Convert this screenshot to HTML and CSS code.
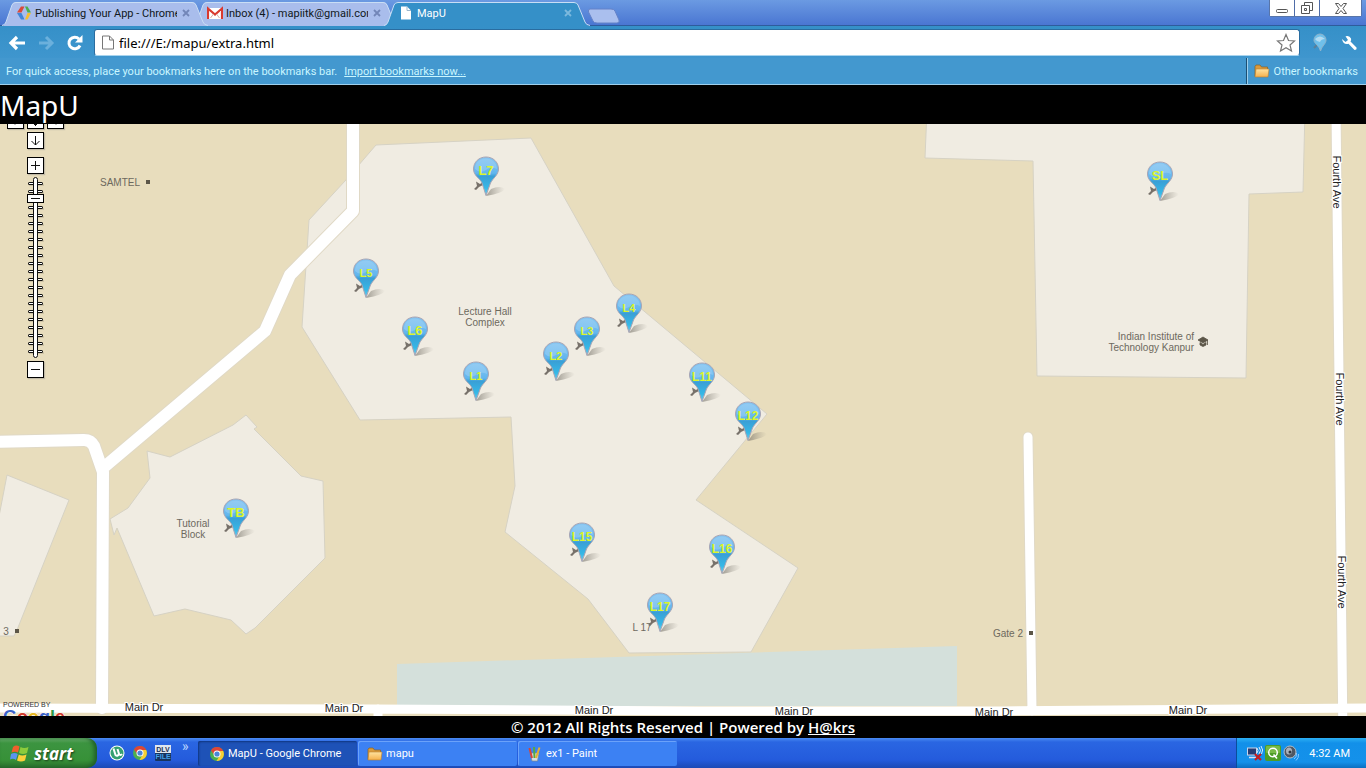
FILE: index.html
```html
<!DOCTYPE html>
<html lang="en">
<head>
<meta charset="utf-8">
<title>MapU</title>
<link rel="stylesheet" href="styles.css">
</head>
<body>
<svg class="defs" aria-hidden="true">
  <defs>
    <linearGradient id="pinFill" x1="0" y1="0" x2="0" y2="1">
      <stop offset="0" stop-color="#86c4f0"/><stop offset=".42" stop-color="#62b6ee"/><stop offset=".5" stop-color="#3a9fd6"/><stop offset=".8" stop-color="#36b8e6"/><stop offset="1" stop-color="#6fcaf0"/>
    </linearGradient>
    <linearGradient id="pinShadow" x1="0" y1="0" x2="1" y2="0">
      <stop offset="0" stop-color="#6b675e" stop-opacity=".6"/><stop offset="1" stop-color="#8a867c" stop-opacity="0"/>
    </linearGradient>
    <linearGradient id="tabFill" x1="0" y1="0" x2="0" y2="1">
      <stop offset="0" stop-color="#b4c6f2"/><stop offset="1" stop-color="#9cb2e6"/>
    </linearGradient>
    <linearGradient id="folderFill" x1="0" y1="0" x2="0" y2="1">
      <stop offset="0" stop-color="#ffe3a0"/><stop offset="1" stop-color="#f5b04c"/>
    </linearGradient>
    <symbol id="pin" viewBox="0 0 40 42">
      <path d="M14 40 19 33Q28 29 33 33 31 37 14 40Z" fill="url(#pinShadow)"/>
      <path d="M2 33 5 30 4 25.500 8 28 11 26 11 29 7 31 4 34Z" fill="#77716a"/>
      <path d="M14 1C21 1 26.500 6 26.500 13 26.500 19 21 22 18.500 27L14 39.500 10 27C8 22 1.500 20 1.500 13 1.500 6 7 1 14 1Z" fill="url(#pinFill)" stroke="#a9a5b4"/>
      <path d="M3 13C3 6 8 2.500 14 2.500S25 7 25 13Q19 10 14 14 8 18 3 13Z" fill="#a4d5f6" fill-opacity=".45"/>
    </symbol>
    <symbol id="chrome" viewBox="0 0 16 16">
      <circle cx="8" cy="8" r="7" fill="#4caf50"/>
      <path d="M2 4.400A7 7 0 0 1 14.200 5L8 5 5.500 9.500Z" fill="#dd4538"/>
      <path d="M14.200 5A7 7 0 0 1 7.500 15L10.800 9.500 10 5Z" fill="#f7cf35"/>
      <circle cx="8" cy="8" r="3.500" fill="#fff"/><circle cx="8" cy="8" r="2.600" fill="#4a86d8"/>
    </symbol>
    <symbol id="page" viewBox="0 0 12 14"><path d="M.5.500H7.500L11.500 4.500V13.500H.500Z M7.500.500V4.500H11.500" fill="#fff" stroke="#777"/></symbol>
    <symbol id="folder" viewBox="0 0 16 14"><path d="M1 12V2.500L2 1H6L7.500 3H13.500V12.500H1Z" fill="#d99a3c" stroke="#8b6220" stroke-width=".7"/><path d="M1 13 2 5H15L14 13Z" fill="url(#folderFill)" stroke="#b98030" stroke-width=".6"/></symbol>
    <symbol id="tabshape" viewBox="0 0 206 25">
      <path d="M0 25Q3 24 4 21L10 4Q11 1 14 1H190Q193 1 194 4L201 21Q202 24 206 25Z" fill="currentColor" stroke="none"/>
      <path d="M0 24.500Q3 24 4 21L10 4Q11 1.500 14 1.500H190Q193 1.500 194 4L201 21Q202 24 206 24.500" fill="none" stroke="#c9def5"/>
    </symbol>
    <symbol id="close" viewBox="0 0 8 8"><path d="M1 1 7 7M7 1 1 7" fill="none" stroke="currentColor" stroke-width="1.800"/></symbol>
  </defs>
</svg>

<header class="browser">
  <div class="tabstrip">
    <nav class="tabs" aria-label="Tabs">
      <div class="tab first">
        <svg class="tab-shape"><use href="#tabshape"/></svg>
        <svg class="icon16" viewBox="0 0 16 16"><path d="M5 1.500H8.500L5.500 7.500H1Z" fill="#d94a3a"/><path d="M1 8H5.500L8.500 14.500H5Z" fill="#4285d8"/><path d="M9 1.500H11.500L15 7.500H11.500Z" fill="#4caf50"/><path d="M11.500 8H15L11.500 14.500H9Z" fill="#f5bd30"/></svg>
        <span class="tab-title">Publishing Your App - Chrome</span>
        <button class="tab-close" aria-label="Close tab"><svg><use href="#close"/></svg></button>
      </div>
      <div class="tab">
        <svg class="tab-shape"><use href="#tabshape"/></svg>
        <svg class="icon16" viewBox="0 0 16 16"><path d="M1 3H15V14H1Z" fill="#fff"/><path d="M1 14V3.500L8 9.500 15 3.500V14" fill="none" stroke="#d93a30" stroke-width="2.200"/><path d="M3.500 13 6.500 9M12.500 13 9.500 9" stroke="#d9a8a4"/></svg>
        <span class="tab-title">Inbox (4) - mapiitk@gmail.com</span>
        <button class="tab-close" aria-label="Close tab"><svg><use href="#close"/></svg></button>
      </div>
      <div class="tab active">
        <svg class="tab-shape"><use href="#tabshape"/></svg>
        <svg class="icon16" viewBox="0 0 16 16"><path d="M3 1.500H9L13 5.500V14.500H3Z" fill="#fff"/><path d="M9 1.500V5.500H13" fill="none" stroke="#9bb6cc"/></svg>
        <span class="tab-title">MapU</span>
        <button class="tab-close" aria-label="Close tab"><svg><use href="#close"/></svg></button>
      </div>
      <button class="new-tab" aria-label="New tab"><svg viewBox="0 0 34 16"><path d="M3 1H24Q27 1 28 3L32 12Q33 15 30 15H10Q7 15 6 13L1.500 4Q1 1 3 1Z" fill="#aabfee" stroke="#6482c8"/></svg></button>
    </nav>
    <div class="window-buttons">
      <button aria-label="Minimize"><svg viewBox="0 0 14 14"><rect x="1.500" y="8.500" width="11" height="3" rx="1"/></svg></button>
      <button aria-label="Restore"><svg viewBox="0 0 14 14"><path d="M4.500 4V1.500H12.500V9.500H10M1.500 4.500H9.500V12.500H1.500ZM4.500 7.500H6.500V9.500H4.500Z"/></svg></button>
      <button class="wide" aria-label="Close"><svg viewBox="0 0 14 14"><path d="M1.500 2.500H4.500L7 5.500 9.500 2.500H12.500L9 7.500 12.500 12.500H9.500L7 9.500 4.500 12.500H1.500L5 7.500Z"/></svg></button>
    </div>
  </div>

  <div class="toolbar">
    <button aria-label="Back"><svg viewBox="0 0 18 18"><path d="M17 9H4M9 3 3 9 9 15" stroke="#fff" stroke-width="3.200" fill="none"/></svg></button>
    <button class="faded" aria-label="Forward"><svg viewBox="0 0 18 18"><path d="M2 9H14M9 3 15 9 9 15" stroke="#6bb0dc" stroke-width="3" fill="none"/></svg></button>
    <button aria-label="Reload"><svg viewBox="0 0 18 18"><path d="M14 11.500A5.800 5.800 0 1 1 13 5" stroke="#fff" stroke-width="3" fill="none"/><path d="M16.500 1V8.500H9Z" fill="#fff"/></svg></button>
    <div class="omnibox">
      <svg class="page-icon"><use href="#page"/></svg>
      <input class="url" type="text" aria-label="Address" value="file:///E:/mapu/extra.html">
      <button aria-label="Bookmark this page"><svg viewBox="0 0 20 20"><path d="M10 1.500 12.500 7.500 18.500 8 14 12 15.500 18 10 14.700 4.500 18 6 12 1.500 8 7.500 7.500Z" fill="#fff" stroke="#777" stroke-width="1.200"/></svg></button>
    </div>
    <button class="ext" aria-label="MapU extension"><svg viewBox="0 0 18 20"><path d="M3 15 7 11" stroke="#5b7f98" stroke-width="2"/><path d="M9 1A6 6 0 0 1 15 7C15 11 11.500 12 9.500 18 8 12 3 11 3 7A6 6 0 0 1 9 1Z" fill="#6fc0ea" stroke="#8fb4cc"/><path d="M4 6Q9 1 14 6 10 6 9 9 6 9 4 6Z" fill="#b4dcf2"/></svg></button>
    <button aria-label="Settings"><svg viewBox="0 0 18 18"><path d="M2 5 5.500 8 8 6 5.500 2.300Q9.500 1 11 4.500 11.500 6.500 10.500 7.500L16.500 13.500Q17 16 14.500 16L8.500 9.800Q3 11 2 5Z" fill="#fff"/></svg></button>
  </div>

  <div class="bookmarks">
    <span>For quick access, place your bookmarks here on the bookmarks bar.</span>
    <a href="#import">Import bookmarks now...</a>
    <button class="other"><svg><use href="#folder"/></svg>Other bookmarks</button>
  </div>
</header>

<h1 class="site-title">MapU</h1>

<main class="map">
  <svg class="map-art" aria-hidden="true">
    <g transform="translate(0 -124)">
      <g class="building">
        <path d="M376 145 531 138 614 286 767 414 696 500 798 568 751 652 629 653 588 599 505 532 515 486 511 417 360 420 302 327 309 220 345 181Z"/>
        <path d="M927 110 925 158 1033 161 1037 376 1246 378 1249 194 1303 192 1305 110Z"/>
        <path d="M147 451 170 457 233 425 246 415 257 427 254 429 301 476 323 481 325 558 255 628 246 634 231 620 185 609 154 616 117 528 114 535 110 519 128 508 150 478Z"/>
        <path d="M-4 532 7 475 69 500 17 630 14 636 -4 636Z"/>
      </g>
      <path class="water" d="M397 664 957 646V706H397Z"/>
      <g class="road-edge">
        <path class="w13" d="M353 110V211L290 275 265 331 103 468M-10 442 84 440Q91 440 94 446L103 472 102 708"/>
        <path class="w10" d="M1028 437 1032 711M1336 110 1343 740"/>
      </g>
      <g class="road">
        <path class="w13" d="M353 110V211L290 275 265 331 103 468M-10 442 84 440Q91 440 94 446L103 472 102 708"/>
        <path class="w10" d="M-10 708 375 709 700 711 1000 711 1366 708 2600 698M378 709V730M1028 437 1032 711M1336 110 1343 740"/>
      </g>
      <g class="poi-dot"><rect x="146" y="180" width="4" height="4"/><rect x="15" y="629" width="4" height="4"/><rect x="1029" y="631" width="4" height="4"/></g>
      <path class="poi-dot" d="M1198 340 1203 337 1208 340 1203 343ZM1200 342.500 1203 344.500 1206 342.500V345L1203 346.500 1200 345ZM1207.500 340V345" stroke="#5c5648" stroke-width=".8"/>
      <g class="poi">
        <text x="120" y="186">SAMTEL</text>
        <text x="485" y="315">Lecture Hall</text><text x="485" y="326">Complex</text>
        <text x="193" y="527">Tutorial</text><text x="193" y="538">Block</text>
        <text x="1008" y="637">Gate 2</text><text x="6" y="635">3</text><text x="642" y="631">L 17</text>
        <text class="right" x="1194" y="340">Indian Institute of</text><text class="right" x="1194" y="351">Technology Kanpur</text>
      </g>
      <g class="street">
        <text x="144" y="711">Main Dr</text><text x="344" y="712">Main Dr</text><text x="594" y="714">Main Dr</text><text x="794" y="715">Main Dr</text><text x="994" y="716">Main Dr</text><text x="1188" y="714">Main Dr</text>
        <text transform="translate(1333 182) rotate(90)">Fourth Ave</text>
        <text transform="translate(1336 399) rotate(90)">Fourth Ave</text>
        <text transform="translate(1338 582) rotate(90)">Fourth Ave</text>
      </g>
      <text class="powered" x="3" y="707">POWERED BY</text>
      <text class="google" x="3" y="723"><tspan fill="#3a63c8">G</tspan><tspan fill="#d23a2c">o</tspan><tspan fill="#e8b820">o</tspan><tspan fill="#3a63c8">g</tspan><tspan fill="#2c9a4a">l</tspan><tspan fill="#d23a2c">e</tspan></text>
    </g>
  </svg>

  <button class="pin large" style="left:486px;top:32px"><svg><use href="#pin"/></svg><span>L7</span></button>
  <button class="pin" style="left:366px;top:134px"><svg><use href="#pin"/></svg><span>L5</span></button>
  <button class="pin large" style="left:415px;top:192px"><svg><use href="#pin"/></svg><span>L6</span></button>
  <button class="pin" style="left:476px;top:237px"><svg><use href="#pin"/></svg><span>L1</span></button>
  <button class="pin" style="left:556px;top:217px"><svg><use href="#pin"/></svg><span>L2</span></button>
  <button class="pin" style="left:587px;top:192px"><svg><use href="#pin"/></svg><span>L3</span></button>
  <button class="pin" style="left:629px;top:169px"><svg><use href="#pin"/></svg><span>L4</span></button>
  <button class="pin medium" style="left:702px;top:238px"><svg><use href="#pin"/></svg><span>L11</span></button>
  <button class="pin medium" style="left:748px;top:277px"><svg><use href="#pin"/></svg><span>L12</span></button>
  <button class="pin medium" style="left:582px;top:398px"><svg><use href="#pin"/></svg><span>L15</span></button>
  <button class="pin medium" style="left:722px;top:410px"><svg><use href="#pin"/></svg><span>L16</span></button>
  <button class="pin medium" style="left:660px;top:468px"><svg><use href="#pin"/></svg><span>L17</span></button>
  <button class="pin large" style="left:236px;top:374px"><svg><use href="#pin"/></svg><span>TB</span></button>
  <button class="pin large" style="left:1160px;top:37px"><svg><use href="#pin"/></svg><span>SL</span></button>

  <div class="controls">
    <div class="pan">
      <button class="ctl" aria-label="Pan left"><svg viewBox="0 0 15 15"><path d="M3 7.500H12M7 3.500 3 7.500 7 11.500"/></svg></button>
      <button class="ctl" aria-label="Recenter"><svg viewBox="0 0 15 15"><path d="M3.500 7.500H11.500M7.500 3.500V13M5.500 10.500 7.500 12.500 9.500 10.500"/></svg></button>
      <button class="ctl" aria-label="Pan right"><svg viewBox="0 0 15 15"><path d="M3 7.500H12M8 3.500 12 7.500 8 11.500"/></svg></button>
    </div>
    <button class="ctl" aria-label="Pan down"><svg viewBox="0 0 15 15"><path d="M7.500 3V12M3.500 8 7.500 12 11.500 8"/></svg></button>
    <button class="ctl zoom-in" aria-label="Zoom in"><svg viewBox="0 0 15 15"><path d="M3 7.500H12M7.500 3V12"/></svg></button>
    <div class="zoom">
      <svg class="zoom-scale" viewBox="0 0 17 182" aria-hidden="true">
        <path class="sh" d="M2 8H17M2 16H17M2 24H17M2 32H17M2 40H17M2 48H17M2 56H17M2 64H17M2 72H17M2 80H17M2 88H17M2 96H17M2 104H17M2 112H17M2 120H17M2 128H17M2 136H17M2 144H17M2 152H17M2 160H17M2 168H17M2 176H17"/>
        <path class="dark" d="M2.500 6.500H14.500M2.500 14.500H14.500M2.500 22.500H14.500M2.500 30.500H14.500M2.500 38.500H14.500M2.500 46.500H14.500M2.500 54.500H14.500M2.500 62.500H14.500M2.500 70.500H14.500M2.500 78.500H14.500M2.500 86.500H14.500M2.500 94.500H14.500M2.500 102.500H14.500M2.500 110.500H14.500M2.500 118.500H14.500M2.500 126.500H14.500M2.500 134.500H14.500M2.500 142.500H14.500M2.500 150.500H14.500M2.500 158.500H14.500M2.500 166.500H14.500M2.500 174.500H14.500"/>
        <path class="light" d="M2 6.500H15M2 14.500H15M2 22.500H15M2 30.500H15M2 38.500H15M2 46.500H15M2 54.500H15M2 62.500H15M2 70.500H15M2 78.500H15M2 86.500H15M2 94.500H15M2 102.500H15M2 110.500H15M2 118.500H15M2 126.500H15M2 134.500H15M2 142.500H15M2 150.500H15M2 158.500H15M2 166.500H15M2 174.500H15"/>
        <rect x="6.500" y=".5" width="4" height="180" rx="2" fill="#fff" stroke="#111"/>
      </svg>
      <input type="range" min="0" max="100" value="90" aria-label="Zoom level">
    </div>
    <button class="ctl" aria-label="Zoom out"><svg viewBox="0 0 15 15"><path d="M3 7.500H12"/></svg></button>
  </div>
</main>

<footer class="site-footer">© 2012 All Rights Reserved | Powered by&nbsp;<a href="#hakrs">H@krs</a></footer>

<div class="taskbar">
  <button class="start"><svg viewBox="0 0 20 20"><path d="M3 4Q6 1.500 9.500 3.500L8 9.500Q5 8 1.500 9.500Z" fill="#f0602c"/><path d="M10.500 4Q14 6 18.500 4L17 10Q13 12 9 10Z" fill="#8ccb3c"/><path d="M1 11Q4.500 9 7.700 11L6 17Q3 15 0 16.500Z" fill="#5a94f0"/><path d="M8.800 11.500Q12 13.500 16.500 11.500L15 17.500Q11 19.500 7 17.500Z" fill="#fbd03a"/></svg>start</button>
  <div class="quick">
    <button aria-label="uTorrent"><svg viewBox="0 0 16 16"><circle cx="8" cy="8" r="7.500" fill="#fff"/><circle cx="8" cy="8" r="6.500" fill="#35a070"/><path d="M4.500 3.500 6.500 10Q8.500 12 10 9L8.500 4M10 9Q11.500 11 13 9" fill="none" stroke="#fff" stroke-width="2"/></svg></button>
    <button aria-label="Chrome"><svg><use href="#chrome"/></svg></button>
    <button aria-label="DLV file"><svg viewBox="0 0 16 16"><rect width="16" height="16" rx="1" fill="#17345f"/><rect width="16" height="8" fill="#dfe6f0"/><text x="8" y="7" class="dlv" fill="#1d2f50">DLV</text><text x="8" y="14" class="dlv" fill="#45a0e8">FILE</text></svg></button>
    <button class="more" aria-label="More">»</button>
  </div>
  <div class="tasks">
    <button class="task current"><svg><use href="#chrome"/></svg>MapU - Google Chrome</button>
    <button class="task"><svg><use href="#folder"/></svg>mapu</button>
    <button class="task"><svg viewBox="0 0 16 16"><path d="M3 7H12L10.500 15H5Z" fill="#d7dde2" stroke="#7a8690" stroke-width=".7"/><path d="M5 12 2.500 2" stroke="#d6453a" stroke-width="2"/><path d="M7.500 12 7 1" stroke="#56a944" stroke-width="2"/><path d="M9 12 12.500 1.500" stroke="#e7b12d" stroke-width="2"/></svg>ex1 - Paint</button>
  </div>
  <div class="tray">
    <svg viewBox="0 0 16 16"><rect x=".5" y="3" width="9" height="7" fill="#263d74" stroke="#c9d5ea"/><path d="M2 12.500H9" stroke="#dde" stroke-width="1.500"/><path d="M10 3Q12 5.500 10 8M12 2Q15 5.500 12 9M14 1Q17 5 14.500 9" fill="none" stroke="#d8ecff"/><path d="M8 9 14 15M14 9 8 15" stroke="#c21d22" stroke-width="2.200"/></svg>
    <svg viewBox="0 0 16 16"><rect width="16" height="16" rx="2" fill="#4c9d27"/><rect x="1" y="1" width="14" height="7" rx="1" fill="#78ba48"/><circle cx="8" cy="7.500" r="4.300" fill="none" stroke="#fff" stroke-width="1.500"/><path d="M8.500 9.500 12 13.500" stroke="#fff" stroke-width="1.600"/></svg>
    <svg viewBox="0 0 16 16"><circle cx="7" cy="7" r="6" fill="#4f5762" stroke="#b4bcc6"/><ellipse cx="6" cy="6" rx="3" ry="3.500" fill="#aab2bc"/><circle cx="7" cy="7" r="1.500" fill="#30363e"/><path d="M11 14Q14 12 13.500 8M13 15.500Q16 13 15.500 9" fill="none" stroke="#8cc8ff"/></svg>
    <time>4:32 AM</time>
  </div>
</div>
</body>
</html>
```

FILE: styles.css
```css
* { box-sizing: border-box; }
body {
  margin: 0;
  height: 100vh;
  display: flex;
  flex-direction: column;
  overflow: hidden;
  font-family: Roboto, "Noto Sans", sans-serif;
  font-size: 11px;
}
button { margin: 0; padding: 0; border: 0; background: none; color: inherit; font: inherit; }
.defs { position: absolute; width: 0; height: 0; }

/* Browser frame */
.browser { flex: none; color: #c9f6ff; }
.tabstrip {
  display: flex;
  justify-content: space-between;
  align-items: flex-start;
  height: 26px;
  background: linear-gradient(#6b9ae2, #4a76d2);
  border-bottom: 1px solid #2e5c9c;
  padding: 0 4px 0 2px;
}
.tabs { display: flex; }
.tab {
  position: relative;
  display: flex;
  align-items: center;
  width: 206px;
  height: 26px;
  margin-right: -15px;
  padding: 0 14px 0 14px;
  color: #101820;
}
.tab.first { z-index: 1; }
.tab.active { z-index: 2; color: #fff; }
.tab-shape { position: absolute; inset: 1px 0 0; width: 206px; height: 25px; color: #a9bdec; }
.tab.active .tab-shape { color: #3590c8; }
.icon16 { position: relative; width: 16px; height: 16px; flex: none; }
.tab-title { position: relative; flex: 1; margin: 0 5px 0 3px; overflow: hidden; white-space: nowrap; }
.tab-close { position: relative; display: flex; margin-right: 4px; color: #7286b8; }
.tab-close svg { width: 8px; height: 8px; }
.active .tab-close { color: #7cb9de; }
.new-tab { margin: 5px 0 0 12px; }
.new-tab svg { display: block; width: 34px; height: 16px; }
.window-buttons { display: flex; height: 17px; gap: 1px; border: 1px solid #5875a8; border-top: 0; border-radius: 0 0 3px 3px; background: #4f6da8; }
.window-buttons button { width: 24px; background: #fff; }
.window-buttons .wide { width: 41px; }
.window-buttons svg { width: 14px; height: 14px; fill: none; stroke: #555; display: block; margin: 0 auto; }

.toolbar {
  display: flex;
  align-items: center;
  gap: 11px;
  height: 32px;
  padding: 1px 8px 0;
  background: linear-gradient(#3590c8, #3f96ce);
}
.toolbar button { display: flex; }
.toolbar svg { width: 18px; height: 18px; }
.omnibox {
  display: flex;
  align-items: center;
  flex: 1;
  height: 27px;
  margin-left: -1px;
  padding: 0 3px 0 7px;
  background: #fff;
  border: 1px solid #2a6da0;
  border-bottom-color: #a8d4ee;
  border-radius: 3px;
}
.omnibox .page-icon { width: 12px; height: 15px; }
.omnibox button svg { width: 20px; height: 20px; }
.url { flex: 1; min-width: 0; border: 0; padding: 0 5px; font: 13px "Noto Sans", sans-serif; color: #000; background: none; outline: 0; }
.ext svg { height: 20px; }

.bookmarks {
  display: flex;
  align-items: center;
  gap: 7px;
  height: 27px;
  padding-left: 6px;
  background: #4398cf;
  border-bottom: 1px solid #9fd0ec;
}
.bookmarks a { color: inherit; }
.other { display: flex; align-items: center; gap: 4px; align-self: stretch; margin-left: auto; padding: 0 8px 0 7px; border-left: 1px solid #1c4f72; box-shadow: inset 1px 0 #9fd0ec; }
.other svg { width: 16px; height: 14px; }

/* Page */
.site-title { flex: none; margin: 0; height: 39px; background: #000; color: #fff; font: 28px/40px "Noto Sans", sans-serif; }
.site-footer { flex: none; display: flex; justify-content: center; height: 22px; background: #000; color: #fff; font: 600 15px/22px "Open Sans", sans-serif; }
.site-footer a { color: inherit; }

.map { position: relative; flex: 1; min-height: 0; overflow: hidden; background: #e8ddbd; font-family: "Liberation Sans", Arial, sans-serif; }
.map-art { position: absolute; inset: 0; width: 100%; height: 100%; }
.building { fill: #f0ece2; stroke: #d6d2c4; }
.water { fill: #d4e0db; }
.road, .road-edge { fill: none; stroke-linecap: round; stroke-linejoin: round; }
.road { stroke: #fff; }
.road-edge { stroke: #e0d9c6; }
.road .w13 { stroke-width: 12px; }
.road .w10 { stroke-width: 9px; }
.road-edge .w13 { stroke-width: 14px; }
.road-edge .w10 { stroke-width: 11px; }
.poi-dot { fill: #5c5648; }
.poi { font-size: 10px; text-anchor: middle; fill: #6d695e; }
.poi .right { text-anchor: end; }
.street { font-size: 11px; text-anchor: middle; fill: #222; stroke: #fff; stroke-width: 2px; paint-order: stroke; }
.powered { font-size: 7px; fill: #333; }
.google { font: bold 18px "Liberation Sans", sans-serif; stroke: #fff; stroke-width: 1px; paint-order: stroke; }

.pin { position: absolute; width: 40px; height: 42px; margin-left: -14px; font-weight: bold; font-size: 11px; color: #dcf52a; }
.pin.medium { font-size: 12px; }
.pin.large { font-size: 13px; }
.pin svg { display: block; width: 40px; height: 42px; }
.pin span { position: absolute; left: 0; top: 7px; width: 28px; line-height: 16px; text-align: center; }

.controls { position: absolute; left: 7px; top: -12px; display: flex; flex-direction: column; align-items: center; }
.pan { display: flex; gap: 3px; margin-bottom: 3px; }
.ctl { display: block; width: 17px; height: 17px; border: 1px solid #000; background: #fff; box-shadow: 1px 1px 1px #8886; }
.ctl svg { display: block; width: 15px; height: 15px; fill: none; stroke: #111; }
.zoom-in { margin: 8px 0 3px; }
.zoom { position: relative; width: 17px; height: 182px; margin-bottom: 2px; }
.zoom-scale { display: block; width: 17px; height: 182px; fill: none; }
.zoom-scale .sh { stroke: #b5ac93; }
.zoom-scale .dark { stroke: #111; stroke-width: 3px; stroke-linecap: round; }
.zoom-scale .light { stroke: #fff; }
.zoom input { position: absolute; inset: 0; width: 17px; height: 182px; margin: 0; appearance: none; background: none; writing-mode: vertical-lr; direction: rtl; }
.zoom input::-webkit-slider-thumb { appearance: none; width: 17px; height: 9px; border: 1px solid #000; background: linear-gradient(#111, #111) center / 9px 1px no-repeat #fff; }

/* Taskbar */
.taskbar {
  flex: none;
  display: flex;
  height: 30px;
  color: #fff;
  background: linear-gradient(#4a8bf2, #2a66e2 4px, #245bdc 22px, #1c49b4);
}
.start {
  display: flex;
  align-items: center;
  gap: 4px;
  width: 97px;
  padding-left: 10px;
  border-radius: 0 10px 10px 0;
  background: linear-gradient(#71b574, #3c9440 5px, #379138 22px, #2a6e2c);
  box-shadow: inset -3px 0 4px #1f5f28;
  font: italic bold 17px "Open Sans", sans-serif;
  text-shadow: 1px 1px 2px #1a3d1a;
}
.start svg { width: 20px; height: 20px; }
.quick { display: flex; align-items: center; gap: 7px; width: 101px; padding-left: 12px; }
.quick svg { display: block; width: 16px; height: 16px; }
.dlv { font: bold 7px "Liberation Sans", sans-serif; text-anchor: middle; }
.more { align-self: flex-start; margin-left: 4px; font-size: 14px; line-height: 17px; color: #b9d3ff; }
.tasks { display: flex; gap: 1px; flex: 1; padding: 3px 0 2px; }
.task { display: flex; align-items: center; gap: 3px; width: 159px; padding-left: 9px; border-radius: 2px; background: #3c81f3; box-shadow: inset 1px 1px #6ba2fa; }
.task.current { padding-left: 11px; background: #1e52b7; box-shadow: inset 1px 1px 2px #10357e; }
.task svg { width: 16px; height: 16px; }
.tray { display: flex; align-items: center; gap: 2px; padding: 0 16px 0 10px; background: linear-gradient(#2cb0f4, #1290e9 5px, #1491ea 24px, #0c6fc0); border-left: 1px solid #0b4d9c; }
.tray svg { width: 16px; height: 16px; }
.tray time { margin-left: 8px; }
```
